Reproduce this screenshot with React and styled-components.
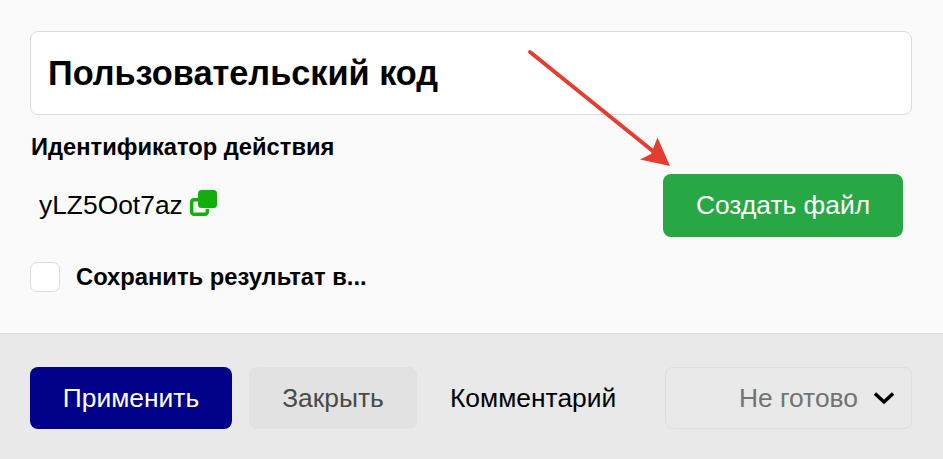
import React from "react";
import styled, { createGlobalStyle } from "styled-components";

const GlobalStyle = createGlobalStyle`
  html, body {
    margin: 0;
    padding: 0;
    background: #fafafa;
    font-family: "Liberation Sans", Arial, sans-serif;
    color: #000;
  }
`;

const Page = styled.div`
  position: relative;
  width: 943px;
  height: 459px;
  overflow: hidden;
  display: flex;
  flex-direction: column;
`;

const Body = styled.div`
  height: 333px;
  box-sizing: border-box;
  padding: 31px 31px 0 30px;
`;

const TitleInput = styled.div`
  box-sizing: border-box;
  height: 84px;
  padding: 0 17px;
  display: flex;
  align-items: center;
  background: #fff;
  border: 1px solid #dcdcdc;
  border-radius: 8px;
  font-size: 34.3px;
  font-weight: 700;
`;

const Label = styled.div`
  margin: 20px 0 0 1px;
  height: 24px;
  line-height: 25px;
  font-size: 23.7px;
  font-weight: 700;
`;

const IdRow = styled.div`
  display: flex;
  align-items: center;
  justify-content: space-between;
  margin-top: 15px;
  padding: 0 9px;
`;

const IdValue = styled.div`
  display: flex;
  align-items: center;
  gap: 7px;
  font-size: 26.4px;
`;

const CopyIcon = styled.svg`
  width: 27px;
  height: 26px;
  margin-top: -5px;
`;

const CreateButton = styled.button`
  width: 240px;
  height: 63px;
  border: 0;
  border-radius: 8px;
  background: #28a745;
  color: #fff;
  font: 400 26.4px "Liberation Sans", Arial, sans-serif;
`;

const CheckRow = styled.label`
  display: flex;
  align-items: center;
  gap: 16px;
  margin-top: 25px;
  font-size: 23.76px;
  font-weight: 700;
`;

const CheckBox = styled.span`
  box-sizing: border-box;
  width: 30px;
  height: 30px;
  background: #fff;
  border: 1px solid #dcdcdc;
  border-radius: 7px;
`;

const Footer = styled.div`
  flex: 1;
  box-sizing: border-box;
  display: flex;
  align-items: flex-start;
  padding: 33px 31px 0 30px;
  background: #e9e9e9;
  border-top: 1px solid #d8d8d8;
`;

const FooterButton = styled.button`
  width: ${(p) => p.$width}px;
  height: 62px;
  margin-right: ${(p) => p.$gap}px;
  border: 0;
  border-radius: 8px;
  background: ${(p) => (p.$primary ? "#000088" : "#e2e2e2")};
  color: ${(p) => (p.$primary ? "#fff" : "#4a4a4a")};
  font: 400 26.4px "Liberation Sans", Arial, sans-serif;
`;

const CommentLink = styled.div`
  height: 62px;
  line-height: 62px;
  font-size: 26.4px;
`;

const StatusSelect = styled.div`
  box-sizing: border-box;
  margin-left: auto;
  width: 247px;
  height: 62px;
  display: flex;
  align-items: center;
  justify-content: flex-end;
  gap: 16px;
  padding-right: 17px;
  border: 1px solid #dedede;
  border-radius: 8px;
  color: #737373;
  font-size: 26.4px;
`;

const Chevron = styled.svg`
  width: 20px;
  height: 13px;
`;

const Arrow = styled.svg`
  position: absolute;
  left: 510px;
  top: 30px;
  width: 170px;
  height: 150px;
`;

export default function App() {
  return (
    <Page>
      <GlobalStyle />
      <Body>
        <TitleInput>Пользовательский код</TitleInput>
        <Label>Идентификатор действия</Label>
        <IdRow>
          <IdValue>
            yLZ5Oot7az
            <CopyIcon viewBox="0 0 27 26">
              <path d="M8 9.7H4A2.3 2.3 0 0 0 1.7 12v10A2.3 2.3 0 0 0 4 24.3h11a2.3 2.3 0 0 0 2.3-2.3v-3" fill="none" stroke="#14ad0c" strokeWidth="3.4" />
              <rect x="8" y="0" width="19" height="18" rx="3.5" fill="#14ad0c" />
            </CopyIcon>
          </IdValue>
          <CreateButton>Создать файл</CreateButton>
        </IdRow>
        <CheckRow>
          <CheckBox />
          Сохранить результат в...
        </CheckRow>
      </Body>
      <Footer>
        <FooterButton $primary $width={202} $gap={17}>Применить</FooterButton>
        <FooterButton $width={168} $gap={33}>Закрыть</FooterButton>
        <CommentLink>Комментарий</CommentLink>
        <StatusSelect>
          Не готово
          <Chevron viewBox="0 0 20 13">
            <path d="M1 1.5l9 8.5 9-8.5" fill="none" stroke="#000" strokeWidth="3.4" />
          </Chevron>
        </StatusSelect>
      </Footer>
      <Arrow viewBox="0 0 170 150">
        <line x1="20" y1="22" x2="144" y2="122" stroke="#e53e30" strokeWidth="4" strokeLinecap="round" />
        <polygon points="147.5,107.5 160,136 130,129.5 141,124" fill="#e53e30" />
      </Arrow>
    </Page>
  );
}
